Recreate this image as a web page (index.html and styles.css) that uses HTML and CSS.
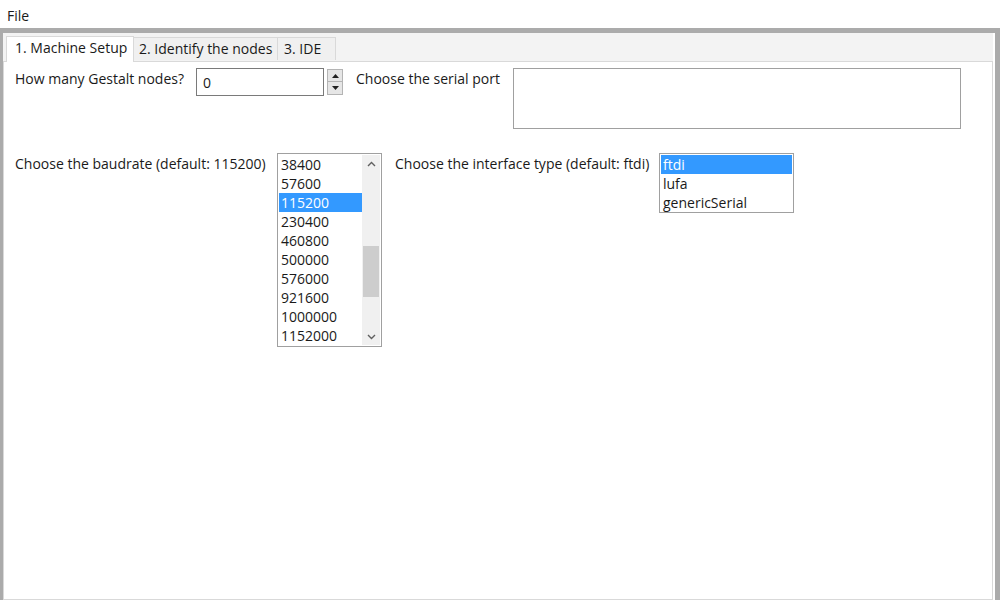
FILE: index.html
```html
<!DOCTYPE html>
<html>
<head>
<meta charset="utf-8">
<title>Machine Setup</title>
<link rel="stylesheet" href="styles.css">
</head>
<body>
<div class="menubar"><span class="menu-item">File</span></div>
<div class="frame">
  <div class="tabstrip">
    <div class="tab tab-active tab1">1. Machine Setup</div>
    <div class="tab tab2">2. Identify the nodes</div>
    <div class="tab tab3">3. IDE</div>
  </div>
  <div class="panel">
    <div class="row row1">
      <div class="label label-nodes">How many Gestalt nodes?</div>
      <div class="spin-input">0</div>
      <div class="spin-buttons">
        <div class="spin-btn"><svg width="7" height="4" viewBox="0 0 7 4"><path d="M0 4 L3.5 0 L7 4 Z" fill="#202020"/></svg></div>
        <div class="spin-btn"><svg width="7" height="4" viewBox="0 0 7 4"><path d="M0 0 L3.5 4 L7 0 Z" fill="#202020"/></svg></div>
      </div>
      <div class="label label-port">Choose the serial port</div>
      <div class="port-box"></div>
    </div>
    <div class="row row2">
      <div class="label label-baud">Choose the baudrate (default: 115200)</div>
      <div class="listbox baud-list">
        <div class="items">
          <div class="item">38400</div>
          <div class="item">57600</div>
          <div class="item selected">115200</div>
          <div class="item">230400</div>
          <div class="item">460800</div>
          <div class="item">500000</div>
          <div class="item">576000</div>
          <div class="item">921600</div>
          <div class="item">1000000</div>
          <div class="item">1152000</div>
        </div>
        <div class="scrollbar">
          <div class="arrow"><svg width="9" height="6" viewBox="0 0 9 6"><path d="M1 5 L4.5 1.5 L8 5" fill="none" stroke="#606060" stroke-width="1.4"/></svg></div>
          <div class="track"><div class="thumb"></div></div>
          <div class="arrow"><svg width="9" height="6" viewBox="0 0 9 6"><path d="M1 1 L4.5 4.5 L8 1" fill="none" stroke="#606060" stroke-width="1.4"/></svg></div>
        </div>
      </div>
      <div class="label label-iface">Choose the interface type (default: ftdi)</div>
      <div class="listbox iface-list">
        <div class="items">
          <div class="item selected">ftdi</div>
          <div class="item">lufa</div>
          <div class="item">genericSerial</div>
        </div>
      </div>
    </div>
  </div>
</div>
</body>
</html>
```

FILE: styles.css
```css
* { box-sizing: border-box; }
html, body {
  margin: 0;
  padding: 0;
  width: 1000px;
  height: 600px;
  overflow: hidden;
  background: #ffffff;
  font-family: "Open Sans", "Noto Sans", "DejaVu Sans", sans-serif;
  font-size: 14px;
  color: #1a1a1a;
}
.menubar {
  height: 28px;
  padding: 6px 0 0 7px;
  line-height: 20px;
  background: #ffffff;
}
.frame {
  height: 572px;
  border-top: 5px solid #ababab;
  border-left: 3px solid #ababab;
  border-right: 5px solid #ababab;
  padding-right: 2px;
  display: flex;
  flex-direction: column;
}
.tabstrip {
  height: 28px;
  background: #f3f3f3;
  display: flex;
  align-items: flex-end;
  padding-left: 3px;
  position: relative;
  z-index: 1;
}
.tab {
  height: 23px;
  line-height: 21px;
  background: #f0f0f0;
  border: 1px solid #d9d9d9;
  border-bottom: none;
  white-space: nowrap;
  margin-bottom: 1px;
}
.tab-active {
  height: 26px;
  background: #ffffff;
  margin-bottom: -1px;
  line-height: 22px;
}
.tab1 { width: 128px; padding-left: 8px; }
.tab2 { width: 144px; padding-left: 5px; border-left: none; }
.tab3 { width: 58px; padding-left: 6px; border-left: none; }
.panel {
  flex: 1;
  background: #ffffff;
  border: 1px solid #d9d9d9;
  padding: 6px 0 0 11px;
}
.row {
  display: flex;
  align-items: flex-start;
}
.row2 { margin-top: 24px; }
.label {
  white-space: nowrap;
  line-height: 19px;
}
.label-nodes { width: 181px; padding-top: 1px; }
.label-port { width: 157px; padding-top: 1px; }
.label-baud { width: 262px; padding-top: 1px; }
.label-iface { width: 264px; padding-top: 1px; }
.spin-input {
  width: 128px;
  height: 28px;
  border: 1px solid #7a7a7a;
  padding: 3px 0 0 6px;
  line-height: 22px;
}
.spin-buttons {
  width: 16px;
  margin: 1px 13px 0 3px;
  display: flex;
  flex-direction: column;
}
.spin-btn {
  height: 13px;
  background: #e6e6e6;
  border: 1px solid #b4b4b4;
  display: flex;
  align-items: center;
  justify-content: center;
}
.spin-btn + .spin-btn { border-top: none; }
.port-box {
  width: 448px;
  height: 61px;
  border: 1px solid #a0a0a0;
}
.listbox {
  border: 1px solid #a0a0a0;
  padding: 1px;
  display: flex;
  background: #ffffff;
}
.baud-list { width: 105px; height: 194px; margin-right: 13px; }
.iface-list { width: 135px; height: 60px; }
.items { flex: 1; }
.item {
  height: 19px;
  line-height: 20px;
  padding-left: 2px;
  white-space: nowrap;
}
.item.selected {
  background: #3399ff;
  color: #ffffff;
}
.scrollbar {
  width: 18px;
  background: #f0f0f0;
  display: flex;
  flex-direction: column;
}
.arrow {
  height: 17px;
  display: flex;
  align-items: center;
  justify-content: center;
}
.track {
  flex: 1;
  padding: 74px 1px 0 1px;
}
.thumb {
  height: 51px;
  background: #cdcdcd;
}
```
